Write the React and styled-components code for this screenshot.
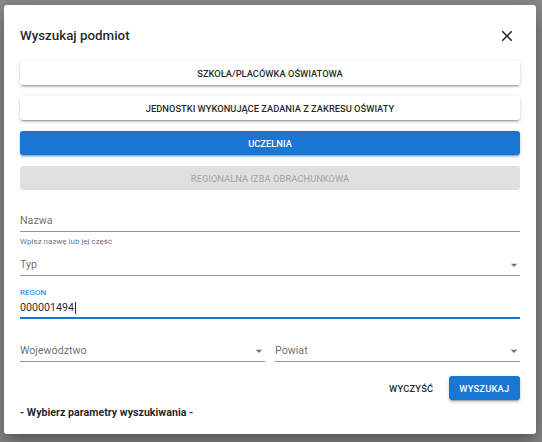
import React from "react";
import styled, { createGlobalStyle } from "styled-components";

const GlobalStyle = createGlobalStyle`
  html, body {
    margin: 0;
    padding: 0;
    background: #898989;
    font-family: Roboto, "Noto Sans", Arial, sans-serif;
  }
  * {
    box-sizing: border-box;
  }
`;

const Page = styled.div`
  width: 542px;
  height: 442px;
  padding: 5px 6px 0 4px;
`;

const Dialog = styled.div`
  width: 532px;
  background: #fff;
  border-radius: 3px;
  padding: 0 16px 14px;
  box-shadow: 0 7px 10px -4px rgba(0, 0, 0, 0.2),
    0 16px 24px 2px rgba(0, 0, 0, 0.14), 0 6px 30px 5px rgba(0, 0, 0, 0.12);
`;

const Header = styled.div`
  display: flex;
  align-items: center;
  justify-content: space-between;
  padding-top: 20px;
  margin-bottom: 15px;
`;

const Title = styled.h2`
  margin: 0;
  font-size: 13.33px;
  line-height: 21px;
  font-weight: 500;
  color: rgba(0, 0, 0, 0.87);
`;

const CloseButton = styled.button`
  border: 0;
  background: none;
  padding: 0;
  margin-right: 4px;
  width: 18px;
  height: 18px;
  display: flex;
  color: rgba(0, 0, 0, 0.87);
  cursor: pointer;
`;

const TypeList = styled.div`
  display: flex;
  flex-direction: column;
  gap: 11px;
`;

const TypeButton = styled.button`
  display: block;
  width: 100%;
  height: 24px;
  margin: 0;
  border: 0;
  border-radius: 3px;
  font-family: inherit;
  font-size: 9.33px;
  font-weight: 500;
  letter-spacing: 0;
  text-transform: uppercase;
  cursor: pointer;
  background: ${(p) => (p.$active ? "#1976d2" : p.disabled ? "#e0e0e0" : "#fff")};
  color: ${(p) =>
    p.$active ? "#fff" : p.disabled ? "rgba(0, 0, 0, 0.26)" : "rgba(0, 0, 0, 0.87)"};
  box-shadow: ${(p) =>
    p.disabled
      ? "none"
      : "0 3px 1px -2px rgba(0,0,0,0.2), 0 2px 2px 0 rgba(0,0,0,0.14), 0 1px 5px 0 rgba(0,0,0,0.12)"};
`;

const Field = styled.div`
  display: flex;
  flex-direction: column;
  margin-top: ${(p) => p.$top || 0}px;
  flex: 1;
  min-width: 0;
`;

const SmallLabel = styled.label`
  font-size: 8px;
  line-height: 10px;
  color: #1976d2;
  margin-bottom: 1px;
`;

const InputRow = styled.div`
  height: 20px;
  display: flex;
  align-items: flex-end;
  justify-content: space-between;
  padding-bottom: ${(p) => (p.$focused ? 3 : 4)}px;
  border-bottom: ${(p) =>
    p.$focused ? "2px solid #1976d2" : "1px solid rgba(0, 0, 0, 0.42)"};
`;

const InputText = styled.span`
  font-size: 10.67px;
  line-height: 12px;
  color: ${(p) => (p.$value ? "rgba(0, 0, 0, 0.87)" : "rgba(0, 0, 0, 0.6)")};
  display: flex;
  align-items: center;
`;

const Caret = styled.span`
  display: inline-block;
  width: 1px;
  height: 12px;
  margin-left: 1px;
  background: #1a2a4a;
`;

const Arrow = styled.svg`
  width: 16px;
  height: 16px;
  margin: 0 -2px -2px 0;
  fill: rgba(0, 0, 0, 0.54);
`;

const Helper = styled.div`
  margin-top: 5px;
  font-size: 8px;
  line-height: 10px;
  color: rgba(0, 0, 0, 0.6);
`;

const Row = styled.div`
  display: flex;
  gap: 10px;
  margin-top: ${(p) => p.$top || 0}px;
`;

const Actions = styled.div`
  display: flex;
  justify-content: flex-end;
  align-items: center;
  gap: 10px;
  margin-top: 14px;
`;

const ActionButton = styled.button`
  height: 24px;
  border: 0;
  border-radius: 3px;
  padding: 0 ${(p) => (p.$primary ? "10.67px" : "5.33px")};
  font-family: inherit;
  font-size: 9.33px;
  font-weight: 500;
  letter-spacing: 0.2px;
  cursor: pointer;
  background: ${(p) => (p.$primary ? "#1976d2" : "transparent")};
  color: ${(p) => (p.$primary ? "#fff" : "rgba(0, 0, 0, 0.87)")};
  box-shadow: ${(p) =>
    p.$primary
      ? "0 3px 1px -2px rgba(0,0,0,0.2), 0 2px 2px 0 rgba(0,0,0,0.14), 0 1px 5px 0 rgba(0,0,0,0.12)"
      : "none"};
`;

const Status = styled.p`
  margin: 6px 0 0;
  font-size: 10.67px;
  line-height: 14px;
  font-weight: 700;
  color: rgba(0, 0, 0, 0.87);
`;

const DropArrow = () => (
  <Arrow viewBox="0 0 24 24">
    <path d="M7 10l5 5 5-5z" />
  </Arrow>
);

const TextField = ({ label, value, select, top, helper, focused }) => (
  <Field $top={top}>
    {value !== undefined && <SmallLabel>{label}</SmallLabel>}
    <InputRow $focused={focused}>
      <InputText $value={value !== undefined}>
        {value !== undefined ? value : label}
        {focused && <Caret />}
      </InputText>
      {select && <DropArrow />}
    </InputRow>
    {helper && <Helper>{helper}</Helper>}
  </Field>
);

const types = [
  { name: "Szkoła/placówka oświatowa" },
  { name: "Jednostki wykonujące zadania z zakresu oświaty" },
  { name: "Uczelnia", active: true },
  { name: "Regionalna Izba Obrachunkowa", disabled: true },
];

export default function App() {
  return (
    <>
      <GlobalStyle />
      <Page>
        <Dialog>
          <Header>
            <Title>Wyszukaj podmiot</Title>
            <CloseButton aria-label="Zamknij">
              <svg viewBox="0 0 24 24" width="18" height="18" fill="currentColor">
                <path d="M19 6.41 17.59 5 12 10.59 6.41 5 5 6.41 10.59 12 5 17.59 6.41 19 12 13.41 17.59 19 19 17.59 13.41 12z" />
              </svg>
            </CloseButton>
          </Header>

          <TypeList>
            {types.map((t) => (
              <TypeButton key={t.name} $active={t.active} disabled={t.disabled}>
                {t.name}
              </TypeButton>
            ))}
          </TypeList>

          <TextField label="Nazwa" top={22} helper="Wpisz nazwę lub jej część" />
          <TextField label="Typ" select top={9} />
          <TextField label="REGON" value="000001494" focused top={12} />

          <Row $top={23}>
            <TextField label="Województwo" select />
            <TextField label="Powiat" select />
          </Row>

          <Actions>
            <ActionButton>WYCZYŚĆ</ActionButton>
            <ActionButton $primary>WYSZUKAJ</ActionButton>
          </Actions>

          <Status>- Wybierz parametry wyszukiwania -</Status>
        </Dialog>
      </Page>
    </>
  );
}
